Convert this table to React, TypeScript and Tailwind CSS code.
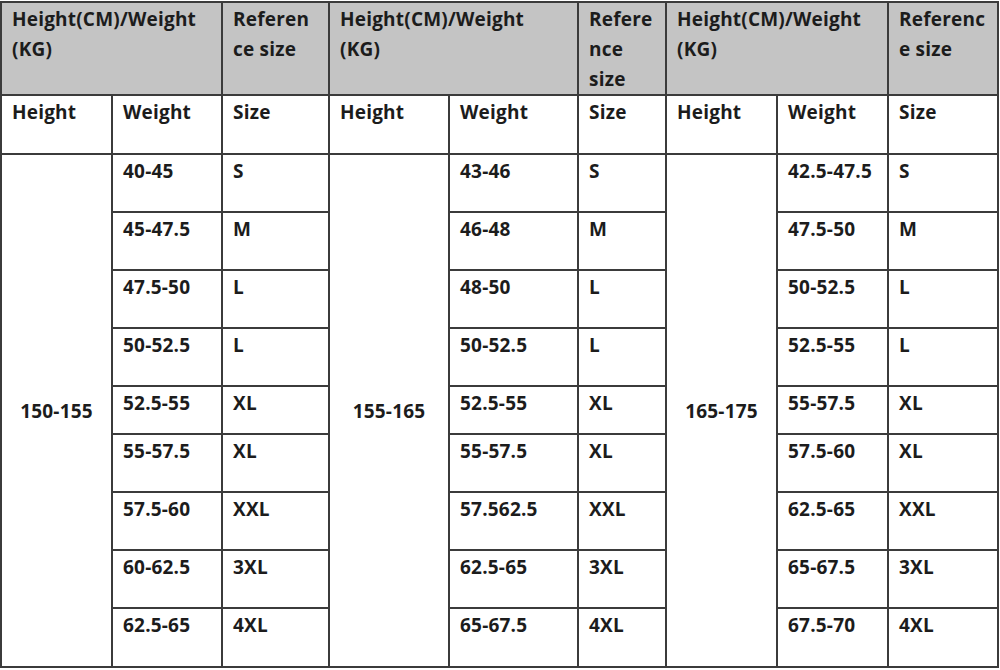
import React from 'react';

type Group = {
  height: string;
  ref: React.ReactNode;
  rows: [string, string][];
};

const groups: Group[] = [
  {
    height: '150-155',
    ref: (<>Referen<br />ce size</>),
    rows: [
      ['40-45', 'S'],
      ['45-47.5', 'M'],
      ['47.5-50', 'L'],
      ['50-52.5', 'L'],
      ['52.5-55', 'XL'],
      ['55-57.5', 'XL'],
      ['57.5-60', 'XXL'],
      ['60-62.5', '3XL'],
      ['62.5-65', '4XL'],
    ],
  },
  {
    height: '155-165',
    ref: (<>Refere<br />nce<br />size</>),
    rows: [
      ['43-46', 'S'],
      ['46-48', 'M'],
      ['48-50', 'L'],
      ['50-52.5', 'L'],
      ['52.5-55', 'XL'],
      ['55-57.5', 'XL'],
      ['57.562.5', 'XXL'],
      ['62.5-65', '3XL'],
      ['65-67.5', '4XL'],
    ],
  },
  {
    height: '165-175',
    ref: (<>Referenc<br />e size</>),
    rows: [
      ['42.5-47.5', 'S'],
      ['47.5-50', 'M'],
      ['50-52.5', 'L'],
      ['52.5-55', 'L'],
      ['55-57.5', 'XL'],
      ['57.5-60', 'XL'],
      ['62.5-65', 'XXL'],
      ['65-67.5', '3XL'],
      ['67.5-70', '4XL'],
    ],
  },
];

const colWidths = [111, 110, 107, 120, 129, 88, 111, 111, 110];
const rowHeights = ['h-[58px]', 'h-[58px]', 'h-[58px]', 'h-[58px]', 'h-[48px]', 'h-[58px]', 'h-[58px]', 'h-[58px]', 'h-[59px]'];

const cell = 'border-2 border-[#3b3b3b] align-top pl-[10px] pt-[1px] text-left whitespace-nowrap';

export default function App() {
  return (
    <div className="w-[1000px] h-[670px] bg-white pt-px overflow-hidden">
      <table
        className="table-fixed border-collapse w-[998px] text-[19px] leading-[30px] font-bold text-[#1c1c1c] tracking-[0.2px]"
        style={{ fontFamily: '"Open Sans", Lato, sans-serif' }}
      >
        <colgroup>
          {colWidths.map((w, i) => (
            <col key={i} style={{ width: w }} />
          ))}
        </colgroup>
        <thead>
          <tr className="h-[93px] bg-[#c4c4c4]">
            {groups.map((g, i) => (
              <React.Fragment key={i}>
                <th colSpan={2} className={cell + ' font-bold'}>
                  Height(CM)/Weight<br />(KG)
                </th>
                <th className={cell + ' font-bold'}>{g.ref}</th>
              </React.Fragment>
            ))}
          </tr>
          <tr className="h-[59px]">
            {groups.map((_, i) => (
              <React.Fragment key={i}>
                <th className={cell + ' font-bold'}>Height</th>
                <th className={cell + ' font-bold'}>Weight</th>
                <th className={cell + ' font-bold'}>Size</th>
              </React.Fragment>
            ))}
          </tr>
        </thead>
        <tbody>
          {rowHeights.map((h, r) => (
            <tr key={r} className={h}>
              {groups.map((g, i) => (
                <React.Fragment key={i}>
                  {r === 0 && (
                    <td rowSpan={9} className="border-2 border-[#3b3b3b] align-middle text-center">
                      {g.height}
                    </td>
                  )}
                  <td className={cell}>{g.rows[r][0]}</td>
                  <td className={cell}>{g.rows[r][1]}</td>
                </React.Fragment>
              ))}
            </tr>
          ))}
        </tbody>
      </table>
    </div>
  );
}
